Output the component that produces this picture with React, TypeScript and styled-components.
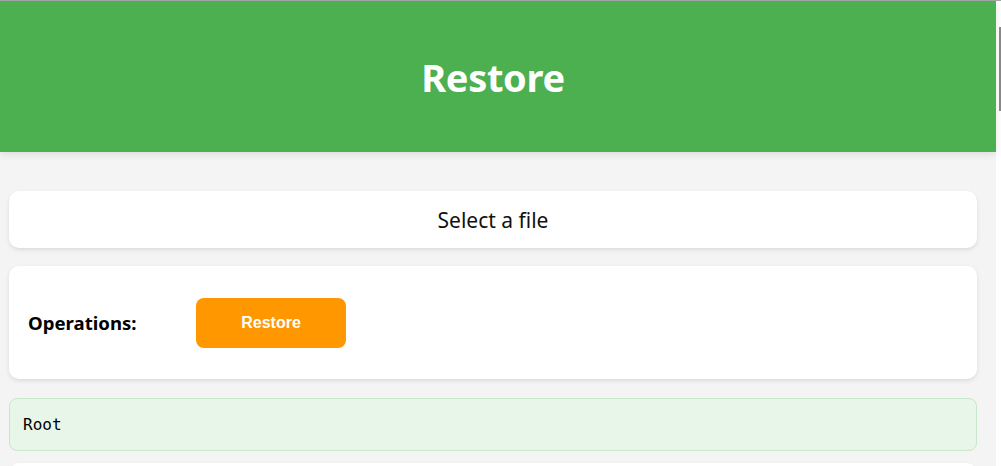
import React from "react";
import styled, { createGlobalStyle } from "styled-components";

const GlobalStyle = createGlobalStyle`
  html, body {
    margin: 0;
    padding: 0;
    background: #f4f4f4;
    overflow: hidden;
    font-family: "Noto Sans", "Open Sans", sans-serif;
  }
`;

const Frame = styled.div`
  display: flex;
  height: 466px;
  overflow: hidden;
  border-top: 1px solid #a3a3a3;
  box-sizing: border-box;
`;

const Main = styled.main`
  width: 996px;
  display: flex;
  flex-direction: column;
  background: #f4f4f4;
`;

const Header = styled.header`
  height: 151px;
  flex: none;
  background: #4caf50;
  box-shadow: 0 2px 8px rgba(0, 0, 0, 0.1);
  display: flex;
  align-items: center;
  justify-content: center;
  padding-right: 10px;
  position: relative;
  z-index: 1;
`;

const Title = styled.h1`
  margin: 0;
  color: #ffffff;
  font-size: 38px;
  font-weight: 700;
  letter-spacing: -0.3px;
  font-family: "Noto Sans", "Open Sans", sans-serif;
`;

const Content = styled.div`
  display: flex;
  flex-direction: column;
  padding: 39px 19px 0 9px;
`;

const Card = styled.section<{ $gap?: number }>`
  flex: none;
  background: #ffffff;
  border-radius: 10px;
  box-shadow: 0 2px 4px rgba(0, 0, 0, 0.1);
  margin-top: ${(p) => p.$gap ?? 0}px;
`;

const FileCard = styled(Card)`
  height: 57px;
  display: flex;
  align-items: center;
  justify-content: center;
  font-size: 21px;
  color: #111;
`;

const OpsCard = styled(Card)`
  height: 113px;
  display: flex;
  align-items: center;
  padding-left: 19px;
`;

const OpsLabel = styled.span`
  width: 168px;
  font-size: 18.6px;
  font-weight: 700;
  color: #000;
`;

const ActionButton = styled.button`
  width: 150px;
  height: 50px;
  border: none;
  border-radius: 8px;
  background: #ff9800;
  color: #ffffff;
  font-family: "Liberation Sans", Arial, sans-serif;
  font-weight: 700;
  font-size: 16px;
  cursor: pointer;
`;

const PathBox = styled.div`
  flex: none;
  margin-top: 19px;
  height: 53px;
  box-sizing: border-box;
  background: #e8f5e9;
  border: 1px solid #c8e6c9;
  border-radius: 8px;
  display: flex;
  align-items: center;
  padding-left: 13px;
  font-family: "DejaVu Sans Mono", "Liberation Mono", monospace;
  font-size: 16px;
  color: #000;
`;

const NextCard = styled(Card)`
  height: 40px;
`;

const ScrollStrip = styled.div`
  width: 5px;
  flex: none;
  background: #ffffff;
  display: flex;
  flex-direction: column;
  align-items: flex-end;
  padding-top: 26px;
  box-sizing: border-box;
`;

const Thumb = styled.div`
  width: 2px;
  height: 84px;
  background: #8a8a8a;
`;

export default function App() {
  return (
    <>
      <GlobalStyle />
      <Frame>
        <Main>
          <Header>
            <Title>Restore</Title>
          </Header>
          <Content>
            <FileCard>Select a file</FileCard>
            <OpsCard $gap={18}>
              <OpsLabel>Operations:</OpsLabel>
              <ActionButton>Restore</ActionButton>
            </OpsCard>
            <PathBox>Root</PathBox>
            <NextCard $gap={12} />
          </Content>
        </Main>
        <ScrollStrip>
          <Thumb />
        </ScrollStrip>
      </Frame>
    </>
  );
}
